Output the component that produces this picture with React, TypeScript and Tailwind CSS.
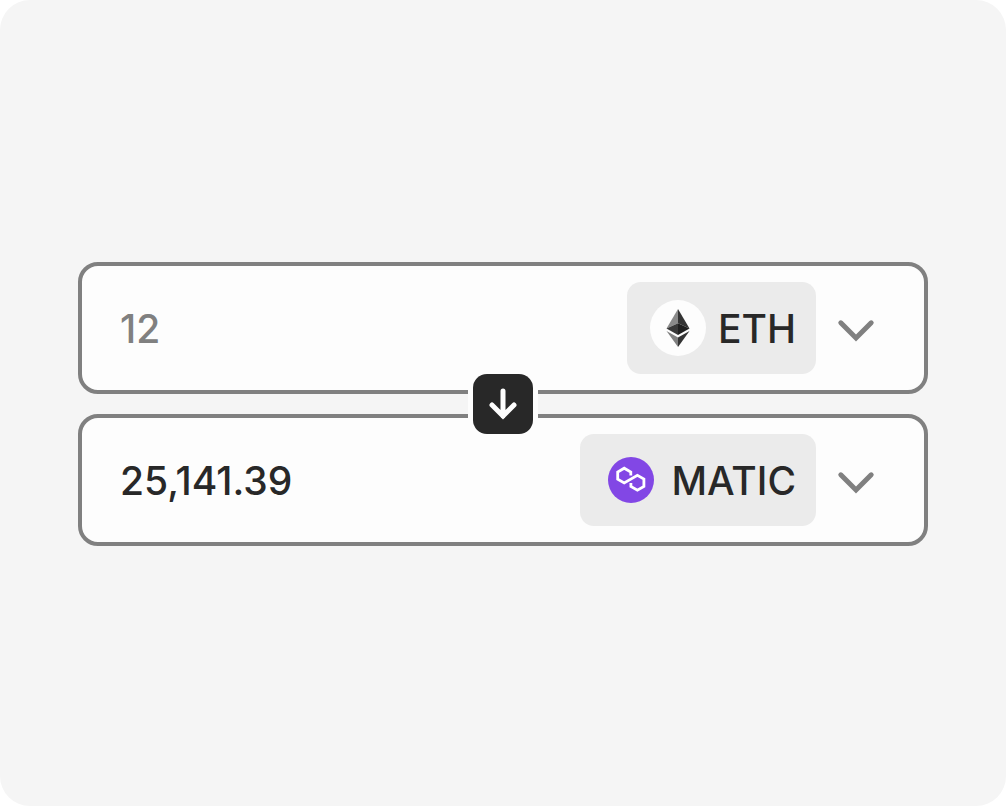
import { useState } from 'react';

type Token = 'ETH' | 'MATIC';

const EthIcon = () => (
  <span className="flex size-14 items-center justify-center rounded-full bg-[#fdfdfd]">
    <svg width="24" height="38" viewBox="0 0 24 38" aria-hidden="true">
      <path d="M12 0L0.5 19.5L12 14.2Z" fill="#8a8a8a" />
      <path d="M12 0L23.5 19.5L12 14.2Z" fill="#343434" />
      <path d="M12 14.2L0.5 19.5L12 26Z" fill="#393939" />
      <path d="M12 14.2L23.5 19.5L12 26Z" fill="#202020" />
      <path d="M0.5 22L12 38V28.6Z" fill="#808080" />
      <path d="M23.5 22L12 38V28.6Z" fill="#343434" />
    </svg>
  </span>
);

const MaticIcon = () => (
  <span className="flex size-14 items-center justify-center">
    <svg width="46" height="46" viewBox="0 0 46 46" aria-hidden="true">
      <circle cx="23" cy="23" r="23" fill="#8247e5" />
      <path
        d="M22.8 18.5V15L16.2 11.2L9.7 15V22.2L16.2 26L29.4 18.4L35.9 22V29.4L29.4 33.2L22.9 29.4V26"
        fill="none"
        stroke="#fff"
        strokeWidth="2.8"
      />
    </svg>
  </span>
);

const ChevronIcon = () => (
  <svg width="40" height="32" viewBox="0 0 40 32" aria-hidden="true">
    <path
      d="M4.8 10.8L20 26L35.2 10.8"
      fill="none"
      stroke="#808080"
      strokeWidth="5"
      strokeLinecap="round"
    />
  </svg>
);

const ICONS: Record<Token, React.ReactNode> = {
  ETH: <EthIcon />,
  MATIC: <MaticIcon />,
};

interface AmountRowProps {
  label: string;
  token: Token;
  value: string;
  textColor: string;
  onChange: (value: string) => void;
}

const AmountRow = ({ label, token, value, textColor, onChange }: AmountRowProps) => (
  <div className="flex items-center rounded-[20px] border-4 border-[#808080] bg-[#fdfdfd] py-4 pr-12 pl-[38px]">
    <input
      type="text"
      inputMode="decimal"
      aria-label={label}
      value={value}
      onChange={e => onChange(e.target.value)}
      className={`min-w-0 flex-1 bg-transparent pt-0.5 text-[39px] leading-[48px] font-medium outline-none ${textColor}`}
    />
    <button type="button" aria-haspopup="listbox" className="flex shrink-0 items-center gap-5">
      <span className="flex h-[92px] items-center gap-3 rounded-[14px] bg-[#ebebeb] pr-5 pl-[23px] text-[39px] leading-[48px] font-medium text-[#282828]">
        {ICONS[token]}
        <span className="pt-0.5">{token}</span>
      </span>
      <ChevronIcon />
    </button>
  </div>
);

const App = () => {
  const [tokens, setTokens] = useState<[Token, Token]>(['ETH', 'MATIC']);
  const [amounts, setAmounts] = useState<[string, string]>(['12', '25,141.39']);

  const swap = () => {
    setTokens([tokens[1], tokens[0]]);
    setAmounts([amounts[1], amounts[0]]);
  };

  return (
    <div className="bg-white font-['Inter',sans-serif]">
      <main className="flex min-h-screen items-center rounded-[30px] bg-[#f5f5f5] px-[78px] pt-0.5">
        <div className="relative flex w-full flex-col gap-5">
          <AmountRow
            label="You pay"
            token={tokens[0]}
            value={amounts[0]}
            textColor="text-[#808080]"
            onChange={v => setAmounts([v, amounts[1]])}
          />
          <AmountRow
            label="You receive"
            token={tokens[1]}
            value={amounts[1]}
            textColor="text-[#282828]"
            onChange={v => setAmounts([amounts[0], v])}
          />
          {/* Swap button sits over the gap between the rows */}
          <div className="absolute inset-0 m-auto size-[70px] bg-[#fdfdfd] p-[5px]">
            <button
              type="button"
              onClick={swap}
              aria-label="Swap tokens"
              className="flex size-full items-center justify-center rounded-[14px] bg-[#282828]"
            >
              <svg width="32" height="36" viewBox="0 0 32 36" aria-hidden="true">
                <path
                  d="M16 5V30M5 19L16 30L27 19"
                  fill="none"
                  stroke="#fdfdfd"
                  strokeWidth="5"
                  strokeLinecap="round"
                />
              </svg>
            </button>
          </div>
        </div>
      </main>
    </div>
  );
};

export default App;
